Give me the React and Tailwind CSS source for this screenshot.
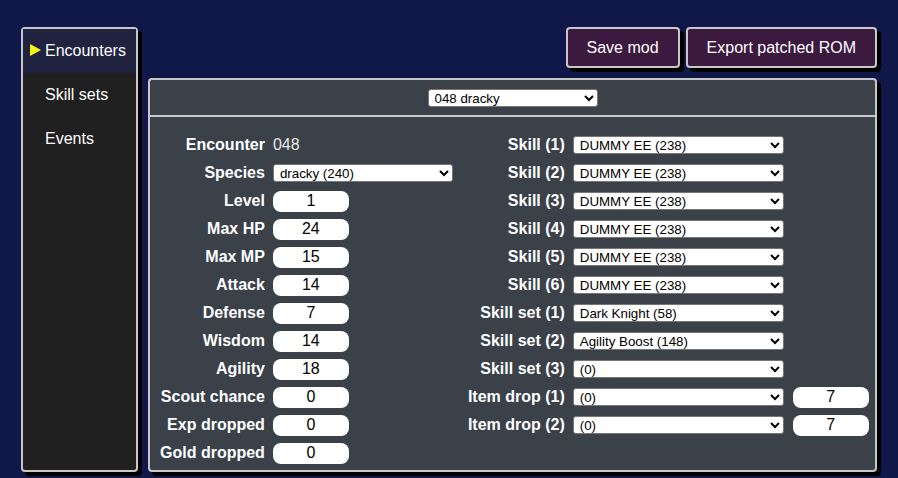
import React from "react";

const leftRows = [
  ["Species", "select", "dracky (240)"],
  ["Level", "input", "1"],
  ["Max HP", "input", "24"],
  ["Max MP", "input", "15"],
  ["Attack", "input", "14"],
  ["Defense", "input", "7"],
  ["Wisdom", "input", "14"],
  ["Agility", "input", "18"],
  ["Scout chance", "input", "0"],
  ["Exp dropped", "input", "0"],
  ["Gold dropped", "input", "0"],
];

const rightRows = [
  ["Skill (1)", "DUMMY EE (238)", null],
  ["Skill (2)", "DUMMY EE (238)", null],
  ["Skill (3)", "DUMMY EE (238)", null],
  ["Skill (4)", "DUMMY EE (238)", null],
  ["Skill (5)", "DUMMY EE (238)", null],
  ["Skill (6)", "DUMMY EE (238)", null],
  ["Skill set (1)", "Dark Knight (58)", null],
  ["Skill set (2)", "Agility Boost (148)", null],
  ["Skill set (3)", "(0)", null],
  ["Item drop (1)", "(0)", "7"],
  ["Item drop (2)", "(0)", "7"],
];

function Sel({ value, className }) {
  return (
    <select
      defaultValue={value}
      className={
        "h-[18px] bg-white text-black text-[13.33px] leading-none border border-[#767676] rounded-[3px] pl-[2px] " +
        className
      }
    >
      <option value={value}>{value}</option>
    </select>
  );
}

function NumInput({ value }) {
  return (
    <input
      readOnly
      value={value}
      className="w-[76px] h-[21px] bg-white text-black text-[16px] text-center rounded-[8px] outline-none"
    />
  );
}

export default function App() {
  return (
    <div
      className="min-h-[478px] w-full bg-[#10184a] flex items-stretch gap-[10px] pl-[21px] pr-[21px] pt-[27px] pb-[6px] text-white"
      style={{ fontFamily: '"Liberation Sans", Arial, sans-serif' }}
    >
      {/* Sidebar */}
      <div className="w-[117px] bg-[#202020] border-2 border-[#c8c8c8] rounded-[4px] shadow-[4px_4px_0_#000] flex flex-col">
        <div className="relative h-[44px] flex items-center pl-[22px] bg-[#20233f] text-[16px]">
          <svg
            className="absolute left-[7px] top-[15px]"
            width="11"
            height="12"
            viewBox="0 0 11 12"
          >
            <polygon points="0,0 11,6 0,12" fill="#f5f50f" />
          </svg>
          Encounters
        </div>
        <div className="h-[44px] flex items-center pl-[22px] text-[16px]">Skill sets</div>
        <div className="h-[44px] flex items-center pl-[22px] text-[16px]">Events</div>
      </div>

      {/* Main column */}
      <div className="flex-1 flex flex-col gap-[10px]">
        <div className="flex justify-end gap-[6px]">
          <button className="h-[41px] px-[19px] bg-[#3c193e] border-2 border-[#c8c8c8] rounded-[4px] shadow-[4px_4px_0_#000] text-[16px] text-white">
            Save mod
          </button>
          <button className="h-[41px] px-[19px] bg-[#3c193e] border-2 border-[#c8c8c8] rounded-[4px] shadow-[4px_4px_0_#000] text-[16px] text-white">
            Export patched ROM
          </button>
        </div>

        <div className="flex-1 bg-[#3a4149] border-2 border-[#c8c8c8] rounded-[4px] shadow-[4px_4px_0_#000] flex flex-col">
          <div className="h-[37px] flex items-center justify-center border-b-2 border-[#c8c8c8]">
            <Sel value="048 dracky" className="w-[170px]" />
          </div>

          <div className="flex pt-[14px] pb-[1px] pl-[10px]">
            {/* Left grid */}
            <div className="grid grid-cols-[auto_76px] auto-rows-[28px] items-center gap-x-[8px]">
              <div className="text-right font-bold text-[16px]">Encounter</div>
              <div className="text-[16px] text-[#e8e8e8]">048</div>
              {leftRows.map(([label, kind, value]) => (
                <React.Fragment key={label}>
                  <div className="text-right font-bold text-[16px] whitespace-nowrap">{label}</div>
                  {kind === "select" ? (
                    <Sel value={value} className="w-[180px]" />
                  ) : (
                    <NumInput value={value} />
                  )}
                </React.Fragment>
              ))}
            </div>

            {/* Right grid */}
            <div className="ml-[119px] grid grid-cols-[auto_211px_76px] auto-rows-[28px] items-center">
              {rightRows.map(([label, value, num]) => (
                <React.Fragment key={label}>
                  <div className="text-right font-bold text-[16px] whitespace-nowrap mr-[8px]">{label}</div>
                  <Sel value={value} className="w-[211px]" />
                  <div className="ml-[9px]">{num ? <NumInput value={num} /> : null}</div>
                </React.Fragment>
              ))}
            </div>
          </div>
        </div>
      </div>
    </div>
  );
}
